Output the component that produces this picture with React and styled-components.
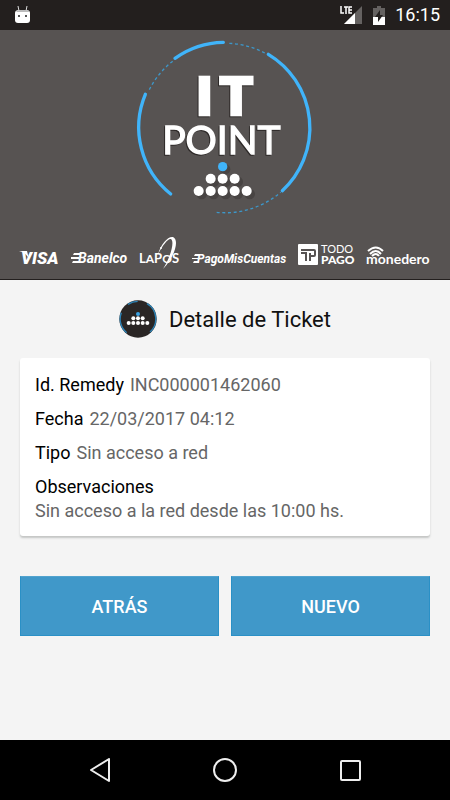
import React from 'react';
import styled, { createGlobalStyle } from 'styled-components';

const GlobalStyle = createGlobalStyle`
  * { box-sizing: border-box; }
  body {
    margin: 0;
    background: #f4f4f4;
    font-family: Roboto, sans-serif;
  }
  svg { display: block; }
`;

const Page = styled.div`
  display: flex;
  flex-direction: column;
  min-height: 100vh;
`;

const StatusBar = styled.div`
  display: flex;
  align-items: center;
  justify-content: space-between;
  height: 30px;
  padding: 0 10px 0 14px;
  background: #231f1e;
  color: #fff;
`;

const StatusItems = styled.div`
  display: flex;
  align-items: center;
  gap: 10px;
`;

const Clock = styled.time`
  font-size: 18px;
  line-height: 24px;
  font-weight: 400;
`;

const Hero = styled.header`
  display: flex;
  flex-direction: column;
  align-items: center;
  gap: 14px;
  padding: 2px 0 9px;
  background: #575352;
  border-bottom: 1px solid #231f1e;
`;

const EmblemDrawing = styled.svg`
  .lettering {
    filter: drop-shadow(-3px 3px 0 #2c2827);
  }
`;

const Brands = styled.div`
  display: flex;
  justify-content: center;
  gap: 11px;
`;

const Content = styled.main`
  flex: 1;
  padding: 20px;
`;

const TitleRow = styled.div`
  display: flex;
  align-items: center;
  justify-content: center;
  gap: 12px;
`;

const Title = styled.h1`
  margin: 0;
  padding-top: 2px;
  font-size: 22px;
  line-height: 36px;
  font-weight: 400;
  color: #111;
`;

const Card = styled.dl`
  display: flex;
  flex-direction: column;
  gap: 10px;
  margin: 20px 0 40px;
  padding: 15px 15px 13px;
  border-radius: 3px;
  background: #fff;
  box-shadow: 0 2px 2px #c4c6c5;
  font-size: 18px;
  line-height: 24px;
`;

const Field = styled.div`
  display: flex;
  flex-direction: ${(p) => (p.$stacked ? 'column' : 'row')};
  column-gap: 6px;
`;

const Label = styled.dt`
  color: #000;
`;

const Value = styled.dd`
  margin: 0;
  color: #666;
`;

const Actions = styled.div`
  display: grid;
  grid-template-columns: 1fr 1fr;
  gap: 12px;
`;

const ActionButton = styled.button`
  height: 60px;
  padding: 2px 0 0;
  border: 1px solid #2a90c6;
  border-top-color: #52a3ce;
  background: #4098c9;
  color: #fff;
  font: 500 18px/24px Roboto, sans-serif;
  cursor: pointer;
`;

const NavBar = styled.nav`
  display: grid;
  grid-template-columns: repeat(3, 125px);
  justify-content: center;
  height: 60px;
  background: #000;
`;

const NavButton = styled.button`
  display: flex;
  align-items: center;
  justify-content: center;
  padding: 0;
  border: 0;
  background: none;
  cursor: pointer;
`;

const dots = [
  [242, 440], [278, 440], [314, 440],
  [206, 477], [242, 477], [278, 477], [314, 477], [350, 477],
];

function Emblem() {
  return (
    <EmblemDrawing width="190" height="190" viewBox="0 0 570 570" role="img" aria-label="IT Point">
      <g fill="none" stroke="#40b4fa" strokeWidth="10" strokeLinecap="round">
        <path d="M135 79A257 257 0 0 1 280 31" />
        <path d="M415 67A257 257 0 0 1 457 476" />
        <path d="M46 187A257 257 0 0 0 122 486" />
      </g>
      <g fill="none" stroke="#3d97c9" strokeWidth="4" strokeDasharray="9 8">
        <path d="M298 34A257 257 0 0 1 410 66" />
        <path d="M58 173A257 257 0 0 1 130 86" />
        <path d="M260 541A257 257 0 0 0 452 481" />
      </g>
      <g className="lettering" fill="#fff" stroke="#fff">
        <g fontFamily="Roboto, sans-serif" fontSize="162" fontWeight="900" strokeWidth="7">
          <text x="199" y="248">I</text>
          <text x="268" y="248">T</text>
        </g>
        <text x="274" y="365" fontFamily="Lato, sans-serif" fontSize="117" strokeWidth="4" textAnchor="middle">POINT</text>
      </g>
      <g fill="#484443">
        <circle cx="286" cy="412" r="15" />
        {dots.map(([x, y]) => <circle key={`${x}-${y}`} cx={x + 9} cy={y + 9} r="16" />)}
      </g>
      <circle cx="278" cy="404" r="14" fill="#40b4fa" />
      {dots.map(([x, y]) => <circle key={`${x}-${y}`} cx={x} cy={y} r="15" fill="#fff" />)}
    </EmblemDrawing>
  );
}

function SmallEmblem() {
  return (
    <svg width="38" height="38" viewBox="0 0 114 114" aria-hidden="true">
      <circle cx="57" cy="57" r="56" fill="#2a2625" />
      <g fill="none" stroke="#2d83b6" strokeWidth="4">
        <path d="M27 13A53 53 0 0 1 56 4" />
        <path d="M84 11A53 53 0 0 1 93 96" />
        <path d="M7 38A53 53 0 0 0 23 98" />
      </g>
      <circle cx="57" cy="42" r="6" fill="#3aa2e2" />
      {[43, 57, 71].map((x) => <circle key={x} cx={x} cy="55" r="6" fill="#fff" />)}
      {[29, 43, 57, 71, 85].map((x) => <circle key={x} cx={x} cy="69" r="6" fill="#fff" />)}
    </svg>
  );
}

function Visa() {
  return (
    <svg width="41" height="34" role="img" aria-label="Visa" fill="#fff">
      <path d="M0 15h8l2 8C8 19 5 16 0 15z" />
      <text x="2" y="28" fontFamily="Roboto, sans-serif" fontSize="17" fontWeight="900" fontStyle="italic">VISA</text>
    </svg>
  );
}

function Banelco() {
  return (
    <svg width="57" height="34" role="img" aria-label="Banelco" fill="#fff">
      <path d="M3 17h6v2H2zM0 21h8v2H0zM2 25h6v2H1z" />
      <text x="7" y="27" fontFamily="Roboto, sans-serif" fontSize="14" fontWeight="700" fontStyle="italic">Banelco</text>
    </svg>
  );
}

function LaPos() {
  return (
    <svg width="42" height="34" role="img" aria-label="LaPos" fill="#fff">
      <text x="0" y="27" fontFamily="Lato, sans-serif" fontWeight="700" fontSize="13">
        L<tspan fontSize="12">A</tspan>P<tspan fontSize="12">O</tspan>S
      </text>
      <path d="M19 18C22 8 29 0 34 1c7 3 1 21-10 32 7-11 12-27 8-30-3-1-8 6-13 15z" />
      <circle cx="22" cy="12" r="1" />
    </svg>
  );
}

function PagoMisCuentas() {
  return (
    <svg width="95" height="34" role="img" aria-label="PagoMisCuentas" fill="#fff">
      <path d="M3 18h5v2H2zM0 22h6v1H0zM2 25h5v2H1z" />
      <text x="5" y="27" fontFamily="Roboto, sans-serif" fontSize="12" fontWeight="700" fontStyle="italic">PagoMisCuentas</text>
    </svg>
  );
}

function TodoPago() {
  return (
    <svg width="57" height="34" role="img" aria-label="Todo Pago" fill="#fff">
      <rect y="8" width="20" height="21" rx="1" />
      <path d="M3 14h13q1 0 1 1v4q0 1-1 1h-4v5M3 17h5v8M12 20v-3" fill="none" stroke="#575352" strokeWidth="2" />
      <text x="23" y="17" fontFamily="Lato, sans-serif" fontSize="11" stroke="#fff" strokeWidth="0">TODO</text>
      <text x="23" y="28" fontFamily="Lato, sans-serif" fontSize="12" fontWeight="900">PAGO</text>
    </svg>
  );
}

function Monedero() {
  return (
    <svg width="65" height="34" role="img" aria-label="monedero" fill="#fff">
      <g fill="none" stroke="#fff" strokeWidth="2">
        <path d="M2 15Q10 8 17 15M4 18Q10 12 15 18M6 20Q10 16 13 20" />
      </g>
      <text x="0" y="28" fontFamily="Lato, sans-serif" fontSize="14" fontWeight="700">monedero</text>
    </svg>
  );
}

const fields = [
  { label: 'Id. Remedy', value: 'INC000001462060' },
  { label: 'Fecha', value: '22/03/2017 04:12' },
  { label: 'Tipo', value: 'Sin acceso a red' },
  { label: 'Observaciones', value: 'Sin acceso a la red desde las 10:00 hs.', stacked: true },
];

export default function App() {
  return (
    <Page>
      <GlobalStyle />
      <StatusBar>
        <svg width="17" height="20" viewBox="0 0 17 20" aria-hidden="true">
          <path d="M4 1l1 5M13 1l-1 5" stroke="#ddd" strokeWidth="1" />
          <path d="M1 8q0-3 4-3h7q4 0 4 3v7q0 3-3 3H4q-3 0-3-3z" fill="#fff" />
          <path d="M2 7q1-2 4-2h6q3 0 3 2z" fill="#bbb" />
          <path d="M4 10h2v2H4zM11 10h2v2h-2z" fill="#555" />
        </svg>
        <StatusItems>
          <svg width="23" height="20" viewBox="0 0 23 20" aria-label="LTE" role="img">
            <path d="M22 1v18H4z" fill="#656261" />
            <path d="M15 8v11H4z" fill="#fff" />
            <path d="M0 0h13v9H0z" fill="#231f1e" />
            <path d="M1 1v7h3M4 2h4M6 2v7M12 2H9v6h3M9 5h3" fill="none" stroke="#fff" strokeWidth="1.5" />
          </svg>
          <svg width="12" height="19" viewBox="0 0 12 19" aria-label="Batería" role="img">
            <path d="M4 0h4v2h4v9H0V2h4z" fill="#656261" />
            <path d="M0 11h12v8H0z" fill="#fff" />
            <path d="M7 4l-5 7h3v5l5-7H7z" fill="#231f1e" />
          </svg>
          <Clock>16:15</Clock>
        </StatusItems>
      </StatusBar>
      <Hero>
        <Emblem />
        <Brands>
          <Visa />
          <Banelco />
          <LaPos />
          <PagoMisCuentas />
          <TodoPago />
          <Monedero />
        </Brands>
      </Hero>
      <Content>
        <TitleRow>
          <SmallEmblem />
          <Title>Detalle de Ticket</Title>
        </TitleRow>
        <Card>
          {fields.map((f) => (
            <Field key={f.label} $stacked={f.stacked}>
              <Label>{f.label}</Label>
              <Value>{f.value}</Value>
            </Field>
          ))}
        </Card>
        <Actions>
          <ActionButton type="button">ATRÁS</ActionButton>
          <ActionButton type="button">NUEVO</ActionButton>
        </Actions>
      </Content>
      <NavBar>
        <NavButton type="button" aria-label="Volver">
          <svg width="24" height="24" fill="none" stroke="#eee" strokeWidth="2" strokeLinejoin="round">
            <path d="M3 12L21 1v22z" />
          </svg>
        </NavButton>
        <NavButton type="button" aria-label="Inicio">
          <svg width="24" height="24" fill="none" stroke="#eee" strokeWidth="2">
            <circle cx="12" cy="12" r="11" />
          </svg>
        </NavButton>
        <NavButton type="button" aria-label="Recientes">
          <svg width="24" height="24" fill="none" stroke="#eee" strokeWidth="2">
            <rect x="3" y="3" width="19" height="19" rx="1" />
          </svg>
        </NavButton>
      </NavBar>
    </Page>
  );
}
